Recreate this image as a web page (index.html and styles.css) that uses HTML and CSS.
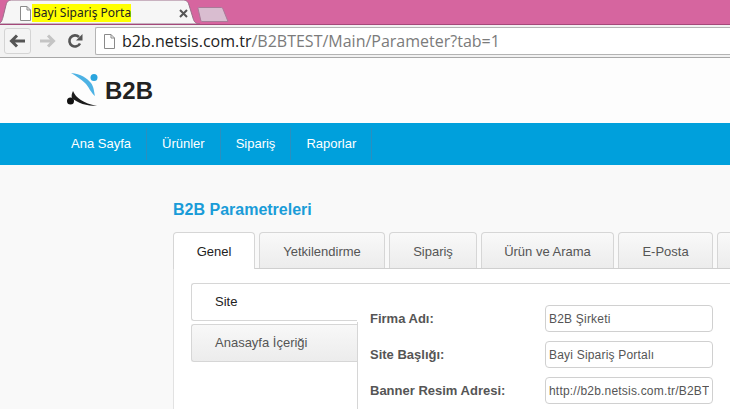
FILE: index.html
```html
<!DOCTYPE html>
<html lang="tr">
<head>
<meta charset="utf-8">
<title>Bayi Sipariş Portalı</title>
<link rel="stylesheet" href="styles.css">
</head>
<body>
<div class="browser">
  <div class="tabstrip">
    <div class="btab">
      <svg class="btab-shape" width="204" height="24" viewBox="0 0 204 24"><path d="M0 24 C5 24 6 21 7 17 L10 5 C11 1 13 0 17 0 L186 0 C190 0 192 1 193 5 L197 18 C198 22 200 24 204 24 Z" fill="#f6f6f6" stroke="#9b6f8a" stroke-width="1"/></svg>
      <svg class="doc" width="12" height="15" viewBox="0 0 12 15"><path d="M1.5 .5H8L11.5 4V14.500H1.500Z M8 .5V4H11.500" fill="#fff" stroke="#8a8a8a"/></svg>
      <span class="btab-title">Bayi Sipariş Portalı</span>
      <svg class="close" width="9" height="9" viewBox="0 0 9 9"><path d="M1 1L8 8M8 1L1 8" stroke="#555" stroke-width="2"/></svg>
    </div>
    <svg class="newtab" width="32" height="15" viewBox="0 0 32 15"><path d="M1 1.500 C1 .8 1.500 .5 2 .5H24C25 .5 25.600 1 26 2L31 14.500H5C4.500 14.500 4 14 3.800 13.500Z" fill="#d9bdd0" stroke="#a97a98"/></svg>
  </div>
  <div class="toolbar">
    <span class="navbtn"><svg width="18" height="14" viewBox="0 0 18 14"><path d="M8 1.500L2.500 7L8 12.500M3 7H16" fill="none" stroke="#555" stroke-width="3"/></svg></span>
    <svg class="fwd" width="18" height="14" viewBox="0 0 18 14"><path d="M10 1.500L15.500 7L10 12.500M15 7H2" fill="none" stroke="#c4c4c4" stroke-width="3"/></svg>
    <svg class="reload" width="16" height="16" viewBox="0 0 16 16"><path d="M13 10.500A5.600 5.600 0 1 1 12 4" fill="none" stroke="#555" stroke-width="2.600"/><path d="M9 7.500H15.500V1Z" fill="#555"/></svg>
    <div class="omnibox">
      <svg class="doc" width="12" height="15" viewBox="0 0 12 15"><path d="M1.500 .5H8L11.500 4V14.500H1.500Z M8 .5V4H11.500" fill="#fff" stroke="#8a8a8a"/></svg>
      <span class="url"><b>b2b.netsis.com.tr</b>/B2BTEST/Main/Parameter?tab=1</span>
    </div>
  </div>
</div>
<header class="site-head">
  <svg class="logo" width="36" height="38" viewBox="0 0 36 38">
    <path d="M4 1C14 2 20 6 24 11C27 15 27 20 28 24C24 21 22 15 18 11C14 7 9 4 4 1Z" fill="#4db2e4"/>
    <circle cx="27" cy="5.500" r="3.500" fill="#2ba5de"/>
    <path d="M6 19C9 26 16 31 30 34C20 34 10 31 5 26C4 24 5 21 6 19Z" fill="#1c1c1c"/>
    <circle cx="3.500" cy="29" r="3.500" fill="#111"/>
  </svg>
  <span class="logo-text">B2B</span>
</header>
<nav class="mainnav">
  <a class="navitem">Ana Sayfa</a>
  <a class="navitem">Ürünler</a>
  <a class="navitem">Sipariş</a>
  <a class="navitem">Raporlar</a>
</nav>
<main class="content">
  <h1 class="title">B2B Parametreleri</h1>
  <div class="tabs">
    <a class="tab active w-genel">Genel</a>
    <a class="tab w-yetki">Yetkilendirme</a>
    <a class="tab w-siparis">Sipariş</a>
    <a class="tab w-urun">Ürün ve Arama</a>
    <a class="tab w-eposta">E-Posta</a>
    <a class="tab w-more"></a>
  </div>
  <div class="panel">
    <div class="side">
      <a class="side-item active">Site</a>
      <a class="side-item">Anasayfa İçeriği</a>
    </div>
    <div class="form">
      <div class="row"><label class="lbl">Firma Adı:</label><input class="inp" value="B2B Şirketi"></div>
      <div class="row"><label class="lbl">Site Başlığı:</label><input class="inp" value="Bayi Sipariş Portalı"></div>
      <div class="row"><label class="lbl">Banner Resim Adresi:</label><input class="inp" value="http://b2b.netsis.com.tr/B2BTEST/Content/banner.png"></div>
    </div>
  </div>
</main>
</body>
</html>
```
FILE: styles.css
```css
* { box-sizing: border-box; }
html, body { margin: 0; height: 409px; overflow: hidden; }
body { background: #f9f9f9; font-family: "Liberation Sans", Arial, sans-serif; width: 730px; }
a { display: block; }
.browser { height: 58px; background: #f2f2f2; border-bottom: 1px solid #a8a8a8; }
.tabstrip { height: 25px; background: #d6659f; border-bottom: 1px solid #a4487a; display: flex; align-items: flex-end; position: relative; }
.btab { position: relative; width: 204px; height: 24px; margin-left: -4px; flex: none; display: flex; align-items: center; padding: 2px 0 0 23px; }
.btab-shape { position: absolute; left: 0; top: 0; }
.btab .doc, .btab-title, .close { position: relative; }
.btab-title { margin-left: 1px; padding: 0 1px 0 1px; background: #ffff00; font: 12px/18px "Noto Sans", sans-serif; color: #222; width: 99px; height: 18px; white-space: nowrap; overflow: hidden; }
.close { margin-left: 48px; }
.newtab { margin: 0 0 2px -3px; }
.toolbar { height: 32px; display: flex; align-items: center; padding: 0 0 0 4px; background: #f2f2f2; }
.navbtn { width: 27px; height: 26px; border: 1px solid #d4d4d4; border-radius: 3px; display: flex; align-items: center; justify-content: center; background: #f4f4f4; }
.fwd { margin-left: 7px; }
.reload { margin-left: 11px; }
.omnibox { margin-left: 12px; flex: 1; height: 28px; background: #fff; border: 1px solid #b4b4b4; border-right: 0; border-radius: 2px 0 0 2px; display: flex; align-items: center; padding-left: 7px; }
.url { margin-left: 7px; font: 16px/24px "Open Sans", sans-serif; color: #7b7b7b; white-space: nowrap; }
.url b { font-weight: 400; color: #222; }
.site-head { height: 65px; background: #fdfdfd; display: flex; align-items: center; padding: 1px 0 0 67px; }
.logo-text { margin-left: 2px; font: 700 24px/30px "Liberation Sans", sans-serif; color: #222; }
.mainnav { height: 42px; background: #00a0dc; display: flex; padding: 5px 0 0 56px; align-items: flex-start; }
.navitem { height: 32px; padding: 0 15px; color: #fff; font-size: 13px; line-height: 32px; border-right: 1px solid #2a8fbf; }
.content { padding: 35px 0 0 173px; }
.title { margin: 0; font-size: 16px; line-height: 20px; font-weight: 700; color: #1a9cd8; }
.tabs { margin-top: 12px; display: flex; gap: 4px; height: 37px; width: 640px; border-bottom: 1px solid #cfcfcf; }
.tab { height: 36px; border: 1px solid #d6d6d6; border-bottom: 0; border-radius: 4px 4px 0 0; background: linear-gradient(#f9f9f9, #ececec); color: #555; font-size: 13px; line-height: 37px; text-align: center; flex: none; }
.tab.active { background: #fff; color: #222; height: 37px; margin-bottom: -1px; }
.w-genel { width: 82px; }
.w-yetki { width: 126px; }
.w-siparis { width: 88px; }
.w-urun { width: 133px; }
.w-eposta { width: 95px; }
.w-more { width: 60px; }
.panel { width: 640px; height: 200px; background: #fff; border-left: 1px solid #e2e2e2; padding: 14px 0 0 17px; display: flex; align-items: flex-start; }
.side { width: 166px; flex: none; display: flex; flex-direction: column; gap: 3px; }
.side-item { height: 38px; border: 1px solid #d6d6d6; border-right: 0; border-radius: 3px 0 0 3px; padding-left: 23px; background: linear-gradient(#f8f8f8, #ececec); color: #555; font-size: 13px; line-height: 36px; }
.side-item.active { background: #fff; color: #222; }
.form { flex: 1; height: 140px; border-top: 1px solid #d6d6d6; border-left: 0; padding: 21px 0 0 13px; position: relative; display: flex; flex-direction: column; gap: 9px; }
.form::before { content: ""; position: absolute; left: 0; top: 38px; bottom: 0; border-left: 1px solid #d6d6d6; }
.row { display: flex; align-items: center; height: 27px; }
.lbl { width: 175px; flex: none; font-size: 13px; font-weight: 700; color: #555; }
.inp { width: 168px; height: 27px; border: 1px solid #d0d0d0; border-radius: 4px; padding: 0 3px; font: 12px "Liberation Sans", sans-serif; letter-spacing: .2px; color: #555; background: #fff; outline: 0; }
```
